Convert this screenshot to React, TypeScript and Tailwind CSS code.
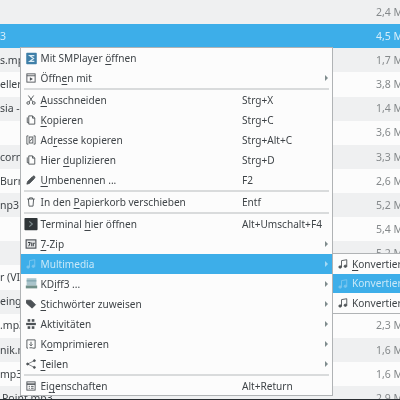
import React from "react";

const rows: [string, string][] = [
  ["", "2,4 MiB"],
  ["3", "4,5 MiB"],
  ["s.mp3", "1,7 MiB"],
  ["eller", "3,8 MiB"],
  ["sia - I", "1,4 MiB"],
  ["", "3,6 MiB"],
  ["corn", "3,3 MiB"],
  ["Burn", "2,6 MiB"],
  ["np3", "5,2 MiB"],
  ["", "5,4 MiB"],
  ["", "5,2 MiB"],
  ["r (VII", ""],
  ["einge", ""],
  [".mp3", "2,3 MiB"],
  ["nik.m", "1,6 MiB"],
  ["mp3", "1,6 MiB"],
  ["Point.mp3", "2,9 MiB"],
];

function I({ children }: { children: React.ReactNode }) {
  return (
    <svg viewBox="0 0 16 16" width="12" height="12" fill="none" stroke="currentColor" strokeWidth="1.2" className="shrink-0">
      {children}
    </svg>
  );
}

const CopyIcon = () => (
  <I>
    <path d="M5 2.5h5l3 3v8H5z" />
    <path d="M3 4.5v7h2M10 2.5v3h3" />
  </I>
);
const MusicIcon = () => (
  <I>
    <path d="M6 12V3.5l7-1.2V11" />
    <ellipse cx="4.2" cy="12" rx="1.8" ry="1.5" fill="currentColor" />
    <ellipse cx="11.2" cy="11" rx="1.8" ry="1.5" fill="currentColor" />
  </I>
);

const icons: Record<string, React.ReactNode> = {
  smplayer: (
    <svg viewBox="0 0 16 16" width="13" height="13" fill="none" className="shrink-0">
      <rect x="1.500" y="1" width="13" height="14" rx="1" fill="#3f7fa8" />
      <path d="M11.5 4.5H6l4.5 3.5L6 11.5h5.500" stroke="#dcecf4" strokeWidth="1.600" />
    </svg>
  ),
  open: (
    <I>
      <rect x="2.5" y="2.5" width="11" height="11" />
      <path d="M2.5 5h11" />
      <path d="M6.5 7v4.5L10.5 9.2z" fill="currentColor" stroke="none" />
    </I>
  ),
  cut: (
    <I>
      <path d="M4.5 2l6 8.5M11.5 2l-6 8.5" />
      <circle cx="4.3" cy="12" r="1.8" />
      <circle cx="11.7" cy="12" r="1.8" />
    </I>
  ),
  copy: <CopyIcon />,
  addr: (
    <I>
      <path d="M4.5 2.5h-2v11h2M11.5 2.5h2v11h-2" />
      <rect x="5.5" y="4" width="5" height="8" />
      <path d="M6.5 10l3-4" />
    </I>
  ),
  rename: (
    <I>
      <path d="M2.5 13.5l1-3.5 6.5-6.5 2.5 2.5L6 12.500z" fill="currentColor" />
      <path d="M11 2.5l2.500 2.500" strokeWidth="2" />
    </I>
  ),
  trash: (
    <I>
      <path d="M3 4h10M6 4V2.500h4V4M4.500 4l.8 9.500h5.400l.8-9.500" />
    </I>
  ),
  terminal: (
    <svg viewBox="0 0 16 16" width="14" height="14" className="shrink-0">
      <rect x="0.500" y="1" width="15" height="14" rx="1" fill="#2f3538" />
      <path d="M6 5l3.500 3L6 11" stroke="#7d8a8c" strokeWidth="1.400" fill="none" />
    </svg>
  ),
  zip: (
    <I>
      <rect x="1.500" y="2.500" width="13" height="11" fill="#e4e6e7" stroke="#4a4f54" strokeWidth="1.500" />
      <path d="M4 6h3L5 11M9 6v5M11 11V7h2" stroke="#31363b" strokeWidth="1.300" />
    </I>
  ),
  music: <MusicIcon />,
  kdiff: (
    <svg viewBox="0 0 16 16" width="13" height="13" className="shrink-0">
      <rect x="2" y="1.500" width="12" height="9" fill="#a9c4cb" />
      <rect x="2" y="4" width="12" height="1.500" fill="#7da2ac" />
      <rect x="1" y="10.500" width="14" height="3.500" fill="#6f8f88" />
    </svg>
  ),
  tag: (
    <I>
      <path d="M2 3h6l6 6-4.500 4.500L2 7z" fill="currentColor" />
    </I>
  ),
  activities: (
    <svg viewBox="0 0 16 16" width="12" height="12" className="shrink-0" fill="currentColor">
      <rect x="3.500" y="1.500" width="3.500" height="3.500" />
      <rect x="9" y="1.500" width="3.500" height="3.500" />
      <rect x="1.500" y="6.500" width="13" height="3" />
      <rect x="3.500" y="11" width="3.500" height="3.500" />
      <rect x="9" y="11" width="3.500" height="3.500" />
    </svg>
  ),
  compress: (
    <I>
      <path d="M4 13.500H2.500v-11h11v11H10" />
      <path d="M8 5v5M6 8.500l2 2 2-2M6 13h4" />
    </I>
  ),
  share: (
    <I>
      <circle cx="3.500" cy="8" r="1.300" fill="currentColor" />
      <circle cx="12.500" cy="3.500" r="1.300" fill="currentColor" />
      <circle cx="12.500" cy="12.500" r="1.300" fill="currentColor" />
      <path d="M3.500 8l9-4.500M3.500 8l9 4.500" strokeWidth="0.900" />
    </I>
  ),
  props: (
    <I>
      <rect x="2.500" y="2.500" width="11" height="11" />
      <path d="M2.500 5.500h11" strokeWidth="2" />
      <path d="M5 8.500h1.500M8 8.500h3.500M5 11h1.500M8 11h3.500" />
    </I>
  ),
};

function Label({ a = "", m = "", b = "" }: { a?: string; m?: string; b?: string }) {
  return (
    <span className="whitespace-pre">
      {a}
      <span className="underline underline-offset-2 decoration-[0.6px]">{m}</span>
      {b}
    </span>
  );
}

type Item = { icon: string; a?: string; m?: string; b?: string; key?: string; arrow?: boolean; active?: boolean };

const groups: Item[][] = [
  [
    { icon: "smplayer", a: "Mit SMPlayer ", m: "ö", b: "ffnen" },
    { icon: "open", a: "Öffn", m: "e", b: "n mit", arrow: true },
  ],
  [
    { icon: "cut", m: "A", b: "usschneiden", key: "Strg+X" },
    { icon: "copy", m: "K", b: "opieren", key: "Strg+C" },
    { icon: "addr", a: "Ad", m: "r", b: "esse kopieren", key: "Strg+Alt+C" },
    { icon: "copy", a: "Hier ", m: "d", b: "uplizieren", key: "Strg+D" },
    { icon: "rename", m: "U", b: "mbenennen ...", key: "F2" },
  ],
  [{ icon: "trash", a: "In den ", m: "P", b: "apierkorb verschieben", key: "Entf" }],
  [
    { icon: "terminal", a: "Terminal ", m: "h", b: "ier öffnen", key: "Alt+Umschalt+F4" },
    { icon: "zip", m: "7", b: "-Zip", arrow: true },
    { icon: "music", a: "Multimedia", arrow: true, active: true },
    { icon: "kdiff", a: "KD", m: "i", b: "ff3 ...", arrow: true },
    { icon: "tag", m: "S", b: "tichwörter zuweisen", arrow: true },
    { icon: "activities", a: "Akti", m: "v", b: "itäten", arrow: true },
    { icon: "compress", a: "K", m: "o", b: "mprimieren", arrow: true },
    { icon: "share", m: "T", b: "eilen", arrow: true },
  ],
  [{ icon: "props", a: "Ei", m: "g", b: "enschaften", key: "Alt+Return" }],
];

function MenuRow({ it }: { it: Item }) {
  const cls = it.active ? "bg-[#3daee9] text-[#c9e8f8]" : "text-[#3f4448]";
  return (
    <div className={`flex items-center h-[20.1px] pl-[2px] ${cls}`}>
      <span className={`w-[16px] flex justify-center ${it.active ? "text-[#7cc6ee]" : "text-[#4d5256]"}`}>{icons[it.icon]}</span>
      <span className="ml-[1.5px] w-[201.5px]">
        <Label a={it.a} m={it.m} b={it.b} />
      </span>
      <span className="whitespace-nowrap">{it.key}</span>
      {it.arrow && (
        <span className={`ml-auto mr-[4px] w-0 h-0 border-y-[3px] border-y-transparent border-l-[3.500px] ${it.active ? "border-l-[#a5d9f4]" : "border-l-[#7f8c8d]"}`} />
      )}
    </div>
  );
}

function SubRow({ active, mark }: { active?: boolean; mark?: boolean }) {
  return (
    <div className={`flex items-center h-[19.7px] pl-[4px] ${active ? "bg-[#3daee9] text-[#c9e8f8]" : "text-[#3f4448]"}`}>
      <span className={`w-[15px] flex justify-center ${active ? "text-[#7cc6ee]" : "text-[#4d5256]"}`}>
        <MusicIcon />
      </span>
      <span className="ml-[1px] pl-[2px] whitespace-nowrap">
        {mark ? <Label m="K" b="onvertieren" /> : "Konvertieren"}
      </span>
    </div>
  );
}

export default function App() {
  return (
    <div className="relative w-[400px] h-[400px] overflow-hidden bg-[#fcfcfc] text-[10.1px] leading-none blur-[0.4px] font-['Noto_Sans',sans-serif]">
      {rows.map(([left, right], i) => (
        <div
          key={i}
          className={`flex items-center justify-between h-[24.125px] whitespace-pre text-[10.5px] ${
            i === 1 ? "bg-[#3daee9] text-[#d6eefa]" : i % 2 === 0 ? "bg-[#eff0f1] text-[#3f4448]" : "bg-[#fcfcfc] text-[#3f4448]"
          }`}
        >
          <span className={i === 16 ? "pl-[2px]" : ""}>{left}</span>
          <span className={`w-[24px] overflow-hidden ${i === 1 ? "text-[#d6eefa]" : "text-[#85898b]"}`}>{right}</span>
        </div>
      ))}

      <div className="absolute left-[20px] top-[47px] w-[313px] h-[348.5px] overflow-hidden bg-[#fcfcfc] border border-[#b0b3b5]">
        {groups.map((g, gi) => (
          <div key={gi}>
            {gi > 0 && <div className="h-[1.600px] mx-[3px] bg-[#d9dbdc]" />}
            {g.map((it, ii) => (
              <MenuRow key={ii} it={it} />
            ))}
          </div>
        ))}
      </div>

      <div className="absolute left-[332px] top-[253px] w-[80px] bg-[#fcfcfc] border border-[#b0b3b5]">
        <SubRow mark />
        <SubRow active />
        <SubRow />
      </div>

      <div className="absolute left-0 right-0 bottom-0 h-px bg-[#2a2e32]" />
    </div>
  );
}
